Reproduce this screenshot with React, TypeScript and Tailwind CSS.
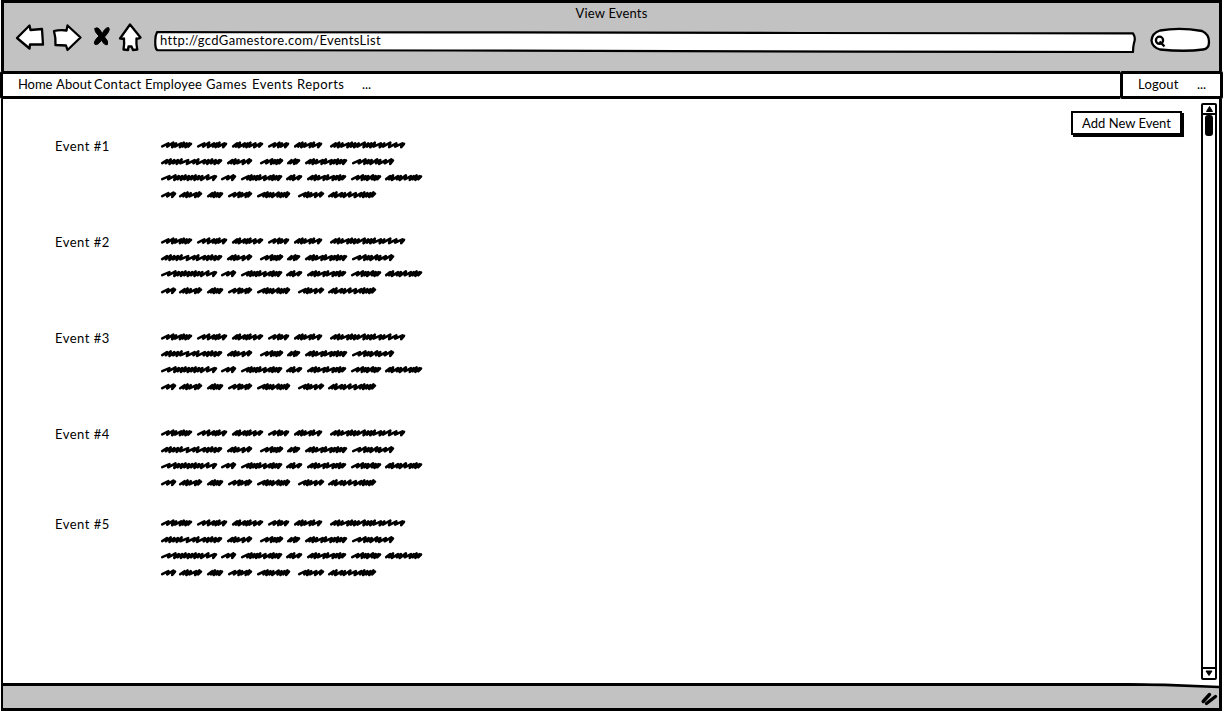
const font = "font-['Lato','Noto_Sans',sans-serif]";

// z is a long open stroke, u a short dense one
const lines: [number, number, string][][] = [
  [[161, 192, 'zzuzuuu'], [197, 227, 'zzzuuz'], [232, 263, 'uuzuuzz'], [268, 289, 'zzuz'], [294, 322, 'uuuzuz'], [330, 405, 'uuuzuuuzuuuzuzzz']],
  [[161, 222, 'uuuuuzzuzuuuu'], [227, 252, 'uuuzz'], [260, 283, 'zzuuu'], [287, 300, 'uzu'], [305, 347, 'uuuzuzuuuu'], [352, 394, 'zzuuzuzz']],
  [[161, 217, 'zzuuuuuuuuzz'], [221, 236, 'zz'], [241, 282, 'zuuuuzzuuu'], [286, 302, 'uuz'], [307, 346, 'uuuzuzuuu'], [351, 381, 'zzuuzuu'], [385, 422, 'uuzuzzuuu']],
  [[161, 176, 'zz'], [179, 202, 'uuuzu'], [207, 223, 'uuuu'], [228, 252, 'zzuzu'], [257, 290, 'zuuuzuuu'], [298, 324, 'zuuzz'], [328, 376, 'uuzuzzzuuuu']],
];
const baselines = [145, 161.7, 177.7, 194.8];

const menu = [
  { label: 'Home', className: 'w-[38px] tracking-[-0.1px]' },
  { label: 'About', className: 'w-[38px] tracking-[0.1px]' },
  { label: 'Contact', className: 'w-[51px] tracking-[0.35px]' },
  { label: 'Employee', className: 'w-[61px] tracking-[0.15px]' },
  { label: 'Games', className: 'w-[46px] tracking-[0.4px]' },
  { label: 'Events', className: 'w-[45px] tracking-[0.5px]' },
  { label: 'Reports', className: 'w-[65px] tracking-[0.45px]' },
];

function stroke(x1: number, x2: number, y: number, pattern: string) {
  const units = [...pattern].map((c) => (c === 'z' ? 1.8 : 1));
  const scale = (x2 - x1 - 5) / units.reduce((a, b) => a + b, 0);
  let x = x1 + 1.2;
  let d = `M${x} ${y + 1.4}`;
  units.forEach((u, i) => {
    const step = u * scale;
    const lift = i % 3 === 1 ? 2.3 : 1.6;
    d += `L${x + step + 1.2} ${y - lift}L${x + step} ${y + (i % 2 ? 2.2 : 1.6)}`;
    x += step;
  });
  return d + `L${x2 - 1} ${y - 1.2}`;
}

function Scribble() {
  return (
    <svg width="266" height="66" viewBox="158 136 266 66" fill="none" stroke="#000" strokeWidth="2.6" strokeLinecap="round" strokeLinejoin="round">
      {lines.map((words, r) => words.map(([a, b, p], i) => <path key={`${r}-${i}`} d={stroke(a, b, baselines[r], p)} />))}
    </svg>
  );
}

function Toolbar() {
  return (
    <div className="flex h-[40px]">
      <svg className="shrink-0" width="148" height="40" viewBox="4 20.5 148 40" fill="#fff" stroke="#000" strokeWidth="2.3" strokeLinejoin="round" strokeLinecap="round">
        <path d="M17 37.5L29.5 25L30.5 29.5L42 28.5L43 44L30 44L29.5 48Z" />
        <path d="M54 30.5Q60 29 66.5 30L67.5 25L80.5 37L67.5 49.5L66 45L55.5 44.5Q56 38 54 30.5Z" />
        <path fill="#000" strokeWidth="1" d="M95 28Q98 25.5 101 31L102 33.5Q105 27 108.5 27Q110.5 29 107 33.5L104.5 36.5Q109 41 107.5 44Q104.5 45.5 101.5 39.5Q98 45 95 44Q93 42 97 37.5L99 35.5Q94 31 95 28Z" />
        <path d="M130 24L140.5 37Q138.5 38.5 136.5 38Q136 44 137.3 49L133 49.5L131.5 46L128.5 46L128 49.5L123.5 49Q124.5 43 124 38Q122 38.5 120 38Z" />
      </svg>
      <div className="relative mt-[10px] ml-[2px] flex h-[22px] w-[982px] items-start pt-px pl-[6px]">
        <svg className="absolute inset-0" width="982" height="22" viewBox="0 0 982 22" fill="#fff" stroke="#000" strokeWidth="2.2" strokeLinejoin="round">
          <path d="M3 1.2L300 1.3L650 2L979 2.4Q982 7 980 12Q979 16 979 21L700 20.6L300 19.5L3 19.1Q1 17 1.3 11Q1 5 3 1.2Z" />
        </svg>
        <span className="relative tracking-[0.36px]">http://gcdGamestore.com/EventsList</span>
      </div>
      <svg className="mt-[2px] ml-[12px]" width="64" height="32" viewBox="1148 24 64 32" fill="#fff" stroke="#000" strokeWidth="2.3">
        <path d="M1160 31.5Q1180 28 1202 32Q1209 35 1209 43Q1209 50 1203 50.5Q1185 53 1160 50.5Q1152 48 1151.5 41.5Q1152 34 1160 31.5Z" />
        <circle cx="1159.5" cy="41.3" r="3.6" /><path d="M1159.5 42.5L1164.5 47.3" />
      </svg>
    </div>
  );
}

export default function App() {
  return (
    <div className={`relative flex h-[712px] w-[1223px] flex-col overflow-hidden bg-white text-[13px] leading-4 text-black ${font}`}>
      <header className="mx-[1px] h-[71px] border-x-[3px] border-t-[3px] border-black bg-[#c2c2c2] pt-[2px]">
        <h1 className="text-center tracking-[0.18px]">View Events</h1>
        <Toolbar />
      </header>
      <nav className="flex h-[28px] shrink-0">
        <div className="flex flex-1 items-start rounded-l-[3px] border-[3px] border-r-0 border-black pt-[2px] pl-[15px]">
          {menu.map((m) => <span key={m.label} className={m.className}>{m.label}</span>)}
          <span className="tracking-[-0.1px]">...</span>
        </div>
        <div className="flex w-[103px] items-start rounded-[2px] border-[3px] border-black pt-[2px] pl-[15px]"><span className="w-[59px] tracking-[0.2px]">Logout</span><span className="tracking-[-0.1px]">...</span></div>
      </nav>
      <main className="mx-[1px] flex h-[584px] shrink-0 border-x-[3px] border-l-[2px] border-black">
        <div className="flex flex-col pt-[37px] pl-[52px]">
          {[96, 96, 96, 90, 90].map((h, i) => (
            <section key={i} className="flex" style={{ height: h }}>
              <span className="w-[103px] pt-[2px] tracking-[0.48px]">Event #{i + 1}</span>
              <Scribble />
            </section>
          ))}
        </div>
        <button className="mt-[12px] mr-[19px] ml-auto h-[24px] w-[111px] border-2 border-black whitespace-nowrap shadow-[2px_2px_0_#000]">Add New Event</button>
        <div className="mt-[4px] mr-[2px] flex h-[577px] w-[16px] flex-col rounded-[2px] border-2 border-black">
          <svg width="12" height="8" viewBox="0 0 12 8"><path d="M6.5 1.5L9.5 6.5H3.5Z" stroke="#000" /></svg>
          <div className="border-t-2 border-black"><div className="mx-[2px] h-[21px] rounded-[3px] bg-black" /></div>
          <svg className="mt-auto border-t-2 border-black" width="12" height="11" viewBox="0 0 12 9"><path d="M3 2H9L6 6.5Z" stroke="#000" /></svg>
        </div>
      </main>
      <footer className="relative mx-[1px] flex h-[28px] shrink-0 justify-end border-[3px] border-l-[2px] border-black bg-[#c2c2c2]">
        <svg className="absolute -top-[3px] right-0" width="90" height="7" viewBox="1129 683 90 7"><path d="M1129 683H1219V687Z" fill="#fff" /><path d="M1129 684.5L1165 684.8L1219 687" fill="none" stroke="#000" strokeWidth="2.7" /></svg>
        <svg width="20" height="22" viewBox="1199 686 20 22" stroke="#000" strokeWidth="3.4" strokeLinecap="round"><path d="M1203.2 701.5L1209.5 694.5M1206.5 703.5L1215.5 696.5" /></svg>
      </footer>
    </div>
  );
}
